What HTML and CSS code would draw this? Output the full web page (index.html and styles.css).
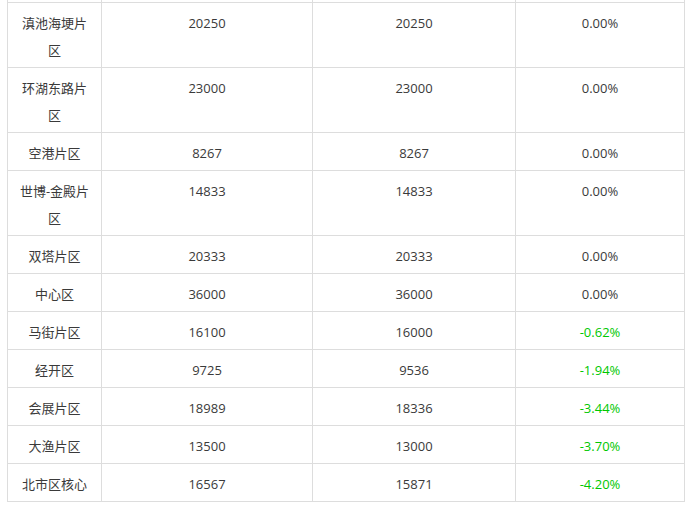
FILE: index.html
```html
<!DOCTYPE html>
<html lang="zh-CN">
<head>
<meta charset="utf-8">
<title>片区房价</title>
<link rel="stylesheet" href="styles.css">
</head>
<body>
<div class="wrap">
<table class="price-table">
  <colgroup>
    <col class="c1"><col class="c2"><col class="c3"><col class="c4">
  </colgroup>
  <tbody>
    <tr class="prev"><td></td><td></td><td></td><td></td></tr>
    <tr><td>滇池海埂片区</td><td>20250</td><td>20250</td><td>0.00%</td></tr>
    <tr><td>环湖东路片区</td><td>23000</td><td>23000</td><td>0.00%</td></tr>
    <tr><td>空港片区</td><td>8267</td><td>8267</td><td>0.00%</td></tr>
    <tr><td>世博-金殿片区</td><td>14833</td><td>14833</td><td>0.00%</td></tr>
    <tr><td>双塔片区</td><td>20333</td><td>20333</td><td>0.00%</td></tr>
    <tr><td>中心区</td><td>36000</td><td>36000</td><td>0.00%</td></tr>
    <tr><td>马街片区</td><td>16100</td><td>16000</td><td class="down">-0.62%</td></tr>
    <tr><td>经开区</td><td>9725</td><td>9536</td><td class="down">-1.94%</td></tr>
    <tr><td>会展片区</td><td>18989</td><td>18336</td><td class="down">-3.44%</td></tr>
    <tr><td>大渔片区</td><td>13500</td><td>13000</td><td class="down">-3.70%</td></tr>
    <tr><td>北市区核心</td><td>16567</td><td>15871</td><td class="down">-4.20%</td></tr>
  </tbody>
</table>
</div>
</body>
</html>
```

FILE: styles.css
```css
html, body {
  margin: 0;
  padding: 0;
  background: #fff;
}
.wrap {
  padding-left: 7px;
}
.price-table {
  border-collapse: collapse;
  table-layout: fixed;
  width: 677px;
  margin-top: -36px;
  font-family: "Open Sans", "Noto Sans CJK SC", sans-serif;
  font-size: 13px;
  line-height: 27px;
  color: #3a3a3a;
}
.c1 { width: 94px; }
.c2 { width: 211px; }
.c3 { width: 203px; }
.c4 { width: 169px; }
.price-table td {
  border: 1px solid #dddddd;
  padding: 7px 10px 3px;
  text-align: center;
  vertical-align: top;
  word-break: break-all;
}
.price-table .prev td {
  height: 27px;
}
.price-table .down {
  color: #00c800;
}
```
